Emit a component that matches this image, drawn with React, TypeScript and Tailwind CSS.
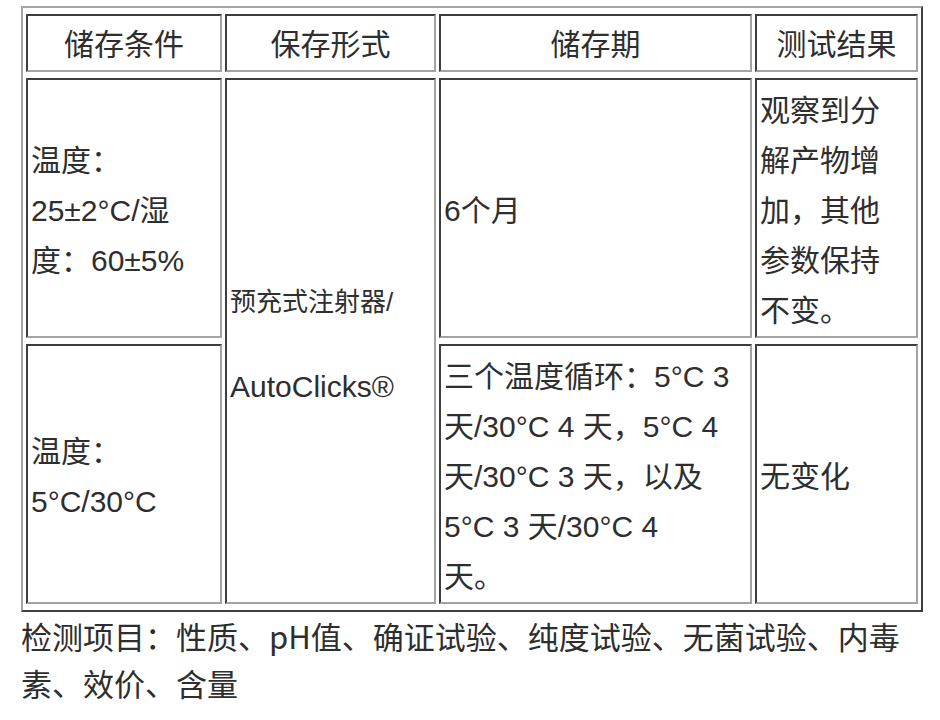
const cell =
  'border-2 border-t-[#3d3d3d] border-l-[#3d3d3d] border-r-[#a3a3a3] border-b-[#a3a3a3] px-[3px] pt-[6px] pb-0 align-middle text-left font-normal whitespace-nowrap';

const head =
  'border-2 border-t-[#3d3d3d] border-l-[#3d3d3d] border-r-[#a3a3a3] border-b-[#a3a3a3] px-[3px] pt-[4px] pb-0 align-middle text-center font-normal whitespace-nowrap';

export default function App() {
  return (
    <div className="min-h-screen bg-white text-[#2e2e2e] font-['Liberation_Sans','Noto_Sans_CJK_SC',sans-serif]">
      <table className="ml-[21px] mt-[6px] w-[902px] table-fixed border-separate border-spacing-x-[3px] border-spacing-y-[6px] border-2 border-t-[#a3a3a3] border-l-[#a3a3a3] border-r-[#3d3d3d] border-b-[#3d3d3d] text-[30px] leading-[50px]">
        <thead>
          <tr>
            <th className={`${head} w-[196px]`}>储存条件</th>
            <th className={`${head} w-[211px]`}>保存形式</th>
            <th className={`${head} w-[313px]`}>储存期</th>
            <th className={`${head} w-[163px]`}>测试结果</th>
          </tr>
        </thead>
        <tbody>
          <tr>
            <td className={cell}>
              温度：
              <br />
              25±2°C/湿
              <br />
              度：60±5%
            </td>
            <td className={cell} rowSpan={2}>
              <div className="text-[26px] leading-[50px]">预充式注射器/</div>
              <div className="mt-[35px] leading-[50px]">AutoClicks®</div>
            </td>
            <td className={cell}>6个月</td>
            <td className={cell}>
              观察到分
              <br />
              解产物增
              <br />
              加，其他
              <br />
              参数保持
              <br />
              不变。
            </td>
          </tr>
          <tr>
            <td className={cell}>
              温度：
              <br />
              5°C/30°C
            </td>
            <td className={cell}>
              三个温度循环：5°C 3
              <br />
              天/30°C 4 天，5°C 4
              <br />
              天/30°C 3 天，以及
              <br />
              5°C 3 天/30°C 4
              <br />
              天。
            </td>
            <td className={cell}>无变化</td>
          </tr>
        </tbody>
      </table>
      <p className="ml-[21px] w-[902px] text-[31px] leading-[47px] font-['Noto_Sans_CJK_SC',sans-serif]">
        检测项目：性质、pH值、确证试验、纯度试验、无菌试验、内毒素、效价、含量
      </p>
    </div>
  );
}
